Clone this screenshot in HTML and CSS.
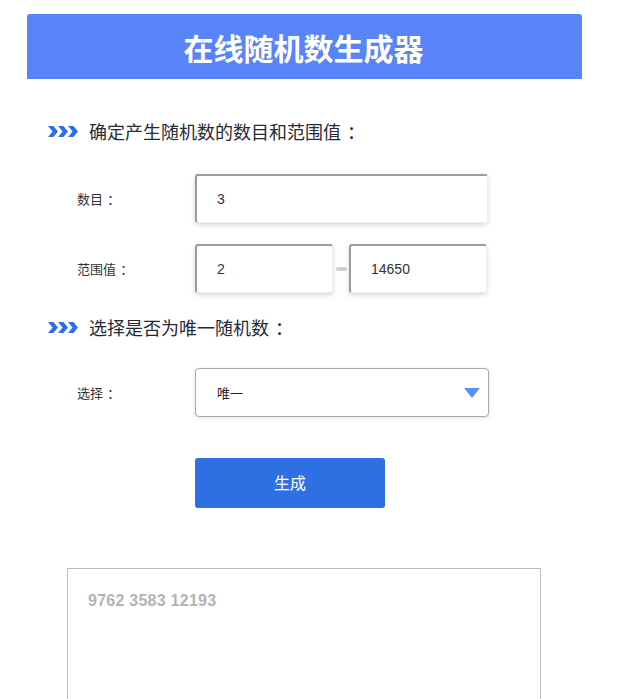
FILE: index.html
```html
<!DOCTYPE html>
<html lang="zh-CN">
<head>
<meta charset="utf-8">
<title>在线随机数生成器</title>
<link rel="stylesheet" href="styles.css">
</head>
<body>
<div class="page">
  <header class="banner"><h1 class="title">在线随机数生成器</h1></header>

  <h2 class="section">
    <svg class="chev" width="30" height="11" viewBox="0 0 30 11"><path d="M0 0h5.4l4.6 5.5-4.6 5.5H0l4.6-5.5z M10 0h5.4l4.6 5.5-4.6 5.5H10l4.6-5.5z M20 0h5.4l4.6 5.5-4.6 5.5H20l4.6-5.5z" fill="#2d6ee5"/></svg>
    <span>确定产生随机数的数目和范围值<span class="colon">：</span></span>
  </h2>

  <div class="row row-first">
    <label class="label">数目<span class="colon">：</span></label>
    <input class="field wide" type="text" value="3">
  </div>
  <div class="row row-range">
    <label class="label">范围值<span class="colon">：</span></label>
    <input class="field half" type="text" value="2">
    <span class="dash"></span>
    <input class="field half" type="text" value="14650">
  </div>

  <h2 class="section section-2">
    <svg class="chev" width="30" height="11" viewBox="0 0 30 11"><path d="M0 0h5.4l4.6 5.5-4.6 5.5H0l4.6-5.5z M10 0h5.4l4.6 5.5-4.6 5.5H10l4.6-5.5z M20 0h5.4l4.6 5.5-4.6 5.5H20l4.6-5.5z" fill="#2d6ee5"/></svg>
    <span>选择是否为唯一随机数<span class="colon">：</span></span>
  </h2>

  <div class="row row-select">
    <label class="label">选择<span class="colon">：</span></label>
    <div class="select-wrap">
      <select class="select"><option>唯一</option><option>不唯一</option></select>
    </div>
  </div>

  <div class="row row-btn">
    <button class="btn" type="button">生成</button>
  </div>

  <div class="output">9762 3583 12193</div>
</div>
</body>
</html>
```

FILE: styles.css
```css
* { box-sizing: border-box; }
html, body { margin: 0; padding: 0; background: #fff; }
body {
  font-family: "Liberation Sans", "Noto Sans CJK SC", sans-serif;
  color: #333;
}
.page {
  width: 555px;
  margin: 14px 0 0 27px;
}
.banner {
  height: 65px;
  background: #5784f7;
  border-radius: 3px 3px 0 0;
  display: flex;
  align-items: center;
  justify-content: center;
}
.title {
  margin: 0;
  font-family: "Noto Sans CJK SC", sans-serif;
  font-size: 30px;
  font-weight: 700;
  color: #fff;
  line-height: 1;
  padding-right: 2px;
}
.colon {
  display: inline-block;
  width: 1em;
  padding-left: 0.33em;
  text-align: left;
}
.section {
  margin: 40px 0 0;
  padding-left: 21px;
  height: 24px;
  display: flex;
  align-items: center;
  gap: 11px;
  font-family: "Noto Sans CJK SC", sans-serif;
  font-size: 18px;
  font-weight: 400;
  color: #262a36;
}
.section-2 { margin-top: 22px; }
.chev { display: block; flex: none; }
.row {
  display: flex;
  align-items: center;
}
.row-first { margin-top: 31px; }
.row-range { margin-top: 21px; }
.row-select { margin-top: 29px; }
.row-btn { margin-top: 41px; padding-left: 168px; }
.label {
  width: 168px;
  padding-left: 50px;
  font-family: "Noto Sans CJK SC", sans-serif;
  font-size: 13px;
  color: #333;
}
.field {
  height: 49px;
  border-top: 2px solid #9b9b9b;
  border-left: 2px solid #9b9b9b;
  border-right: 1px solid #f0f0f0;
  border-bottom: 1px solid #eeeeee;
  border-radius: 3px;
  box-shadow: 0 2px 5px rgba(0, 0, 0, 0.16);
  padding: 0 0 0 20px;
  font-family: "Liberation Sans", sans-serif;
  font-size: 14px;
  color: #333;
  outline: none;
  background: #fff;
}
.wide { width: 293px; }
.half { width: 138px; }
.dash {
  width: 11px;
  height: 4px;
  margin: 0 2px 0 3px;
  background: #cfcfcf;
  border-radius: 2px;
}
.select-wrap {
  position: relative;
  width: 294px;
  height: 49px;
}
.select-wrap::after {
  content: "";
  position: absolute;
  right: 9px;
  top: 20px;
  border-left: 8px solid transparent;
  border-right: 8px solid transparent;
  border-top: 10px solid #5b8ff6;
  pointer-events: none;
}
.select {
  appearance: none;
  -webkit-appearance: none;
  width: 100%;
  height: 100%;
  border: 1px solid #a9a9a9;
  border-radius: 4px;
  box-shadow: 0 1px 4px rgba(0, 0, 0, 0.12);
  background: #fff;
  padding: 0 0 0 21px;
  font-family: "Noto Sans CJK SC", sans-serif;
  font-size: 13px;
  color: #222;
  outline: none;
}
.btn {
  width: 190px;
  height: 50px;
  border: none;
  border-radius: 3px;
  background: #2e6fe4;
  color: #fff;
  font-family: "Noto Sans CJK SC", sans-serif;
  font-size: 16px;
  line-height: 1;
  padding: 0 0 3px;
  cursor: pointer;
}
.output {
  margin: 60px 0 0 40px;
  width: 474px;
  height: 200px;
  border: 1px solid #bdbdbd;
  padding: 23px 0 0 20px;
  font-family: "Liberation Sans", sans-serif;
  font-size: 16px;
  font-weight: 700;
  letter-spacing: 0.25px;
  color: #b3b3b3;
}
```
